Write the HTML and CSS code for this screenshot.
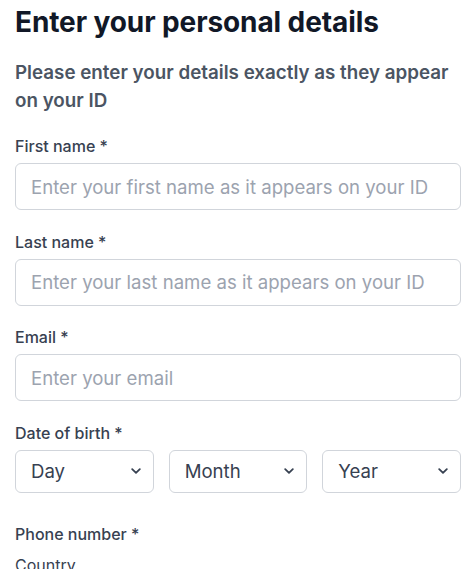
FILE: index.html
```html
<!DOCTYPE html>
<html lang="en">
<head>
<meta charset="utf-8">
<title>Personal details</title>
<link rel="stylesheet" href="styles.css">
</head>
<body>
<main class="page">
  <h1 class="title">Enter your personal details</h1>
  <p class="subtitle">Please enter your details exactly as they appear on your ID</p>

  <div class="field">
    <label class="label" for="fn">First name *</label>
    <input class="input" id="fn" type="text" placeholder="Enter your first name as it appears on your ID">
  </div>

  <div class="field">
    <label class="label" for="ln">Last name *</label>
    <input class="input" id="ln" type="text" placeholder="Enter your last name as it appears on your ID">
  </div>

  <div class="field">
    <label class="label" for="em">Email *</label>
    <input class="input" id="em" type="email" placeholder="Enter your email">
  </div>

  <div class="field">
    <span class="label">Date of birth *</span>
    <div class="dob">
      <div class="select"><span>Day</span><svg class="chev" viewBox="0 0 10 6" width="10" height="6"><path d="M1.2 1.2l3.8 3.6 3.8-3.6" fill="none" stroke="currentColor" stroke-width="1.8" stroke-linecap="round" stroke-linejoin="round"/></svg></div>
      <div class="select"><span>Month</span><svg class="chev" viewBox="0 0 10 6" width="10" height="6"><path d="M1.2 1.2l3.8 3.6 3.8-3.6" fill="none" stroke="currentColor" stroke-width="1.8" stroke-linecap="round" stroke-linejoin="round"/></svg></div>
      <div class="select"><span>Year</span><svg class="chev" viewBox="0 0 10 6" width="10" height="6"><path d="M1.2 1.2l3.8 3.6 3.8-3.6" fill="none" stroke="currentColor" stroke-width="1.8" stroke-linecap="round" stroke-linejoin="round"/></svg></div>
    </div>
  </div>

  <div class="field phone">
    <span class="label">Phone number *</span>
    <span class="sublabel">Country</span>
  </div>
</main>
</body>
</html>
```
FILE: styles.css
```css
* { box-sizing: border-box; }
html, body { margin: 0; background: #ffffff; }
body {
  font-family: Inter, "Noto Sans", "Liberation Sans", sans-serif;
  color: #111827;
}
.page {
  padding: 0 11px 0 15px;
}
.title {
  margin: 0;
  padding-top: 5px;
  font-size: 28px;
  line-height: 34px;
  font-weight: 700;
  color: #111827;
  letter-spacing: -0.1px;
}
.subtitle {
  margin: 20px 0 0;
  font-size: 18.8px;
  line-height: 28px;
  font-weight: 600;
  color: #4b5563;
}
.field {
  display: flex;
  flex-direction: column;
  margin-top: 21px;
}
.field + .field { margin-top: 21.6px; }
.label {
  font-size: 16px;
  line-height: 20px;
  font-weight: 500;
  color: #374151;
  margin-bottom: 7px;
}
.input {
  height: 47px;
  width: 100%;
  border: 1px solid #d1d5db;
  border-radius: 6px;
  padding: 0 15px;
  font-family: inherit;
  font-size: 18.6px;
  color: #374151;
  background: #fff;
  outline: none;
}
.input::placeholder { color: #9ca3af; }
.dob {
  display: grid;
  grid-template-columns: 1fr 1fr 1fr;
  gap: 15px;
}
.select {
  height: 43px;
  border: 1px solid #d1d5db;
  border-radius: 6px;
  padding: 0 12px 0 15px;
  display: flex;
  align-items: center;
  justify-content: space-between;
  font-size: 18.6px;
  color: #374151;
}
.chev { color: #374151; }
.field.phone { margin-top: 31px; }
.sublabel {
  font-size: 16px;
  line-height: 20px;
  color: #374151;
  margin-top: 4px;
}
```
